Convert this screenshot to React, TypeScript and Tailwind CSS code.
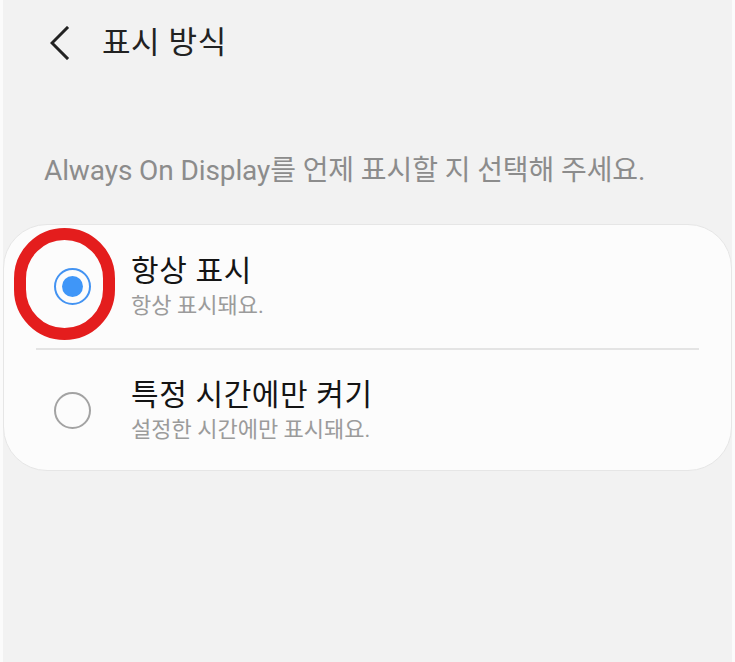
import React from 'react'

// Always On Display: display mode selection screen

type Option = {
    id: string
    title: string
    subtitle: string
}

const options: Option[] = [
    { id: 'always', title: '항상 표시', subtitle: '항상 표시돼요.' },
    { id: 'scheduled', title: '특정 시간에만 켜기', subtitle: '설정한 시간에만 표시돼요.' },
]

function Radio({ checked }: { checked: boolean }) {
    if (checked) {
        return (
            <div className="w-[37px] h-[37px] rounded-full border-[2px] border-[#4393f2] flex items-center justify-center shrink-0">
                <div className="w-[21px] h-[21px] rounded-full bg-[#3f96f8]" />
            </div>
        )
    }
    return <div className="w-[37px] h-[37px] rounded-full border-[2px] border-[#a3a3a3] shrink-0" />
}

export default function App() {
    const selected = 'always'

    return (
        <div className="min-h-screen w-full bg-[#f2f2f2] border-l-[3px] border-r-[3px] border-[#fbfbfb] font-[Roboto,'Noto_Sans_CJK_KR',sans-serif]">
            {/* Header */}
            <div className="h-[86px] flex items-center">
                <button className="ml-[45px] w-[24px] h-[34px] flex items-center justify-center">
                    <svg width="20" height="34" viewBox="0 0 20 34" fill="none">
                        <polyline points="17,2 2,17 17,32" stroke="#222" strokeWidth="3" strokeLinecap="square" strokeLinejoin="miter" />
                    </svg>
                </button>
                <h1 className="ml-[30px] text-[31px] leading-[38px] text-[#222] tracking-[0.6px]">표시 방식</h1>
            </div>

            {/* Description */}
            <p className="mt-[66px] pl-[41px] text-[28px] leading-[38px] text-[#8c8c8c] tracking-[-0.1px]">
                Always On Display를 언제 표시할 지 선택해 주세요.
            </p>

            {/* Options card */}
            <div className="relative mt-[34px] bg-[#fcfcfc] border border-[#e6e6e6] rounded-[44px]">
                {options.map((opt, i) => (
                    <div key={opt.id}>
                        {i > 0 && <div className="h-[2px] bg-[#e4e4e4] ml-[32px] mr-[32px]" />}
                        <div className={`flex items-center ${i === 0 ? 'h-[123px]' : 'h-[120px]'}`}>
                            <div className="ml-[50px]">
                                <Radio checked={opt.id === selected} />
                            </div>
                            <div className="ml-[40px] flex flex-col">
                                <span className="text-[30px] leading-[36px] text-[#141414] tracking-[0.6px]">{opt.title}</span>
                                <span className="mt-[3px] text-[22px] leading-[28px] text-[#9b9b9b]">{opt.subtitle}</span>
                            </div>
                        </div>
                    </div>
                ))}

                {/* Red highlight ring over the selected radio */}
                <div className="absolute left-[10px] top-[3px] w-[101px] h-[112px] rounded-full border-[12px] border-[#e41d1d] pointer-events-none" />
            </div>
        </div>
    )
}
